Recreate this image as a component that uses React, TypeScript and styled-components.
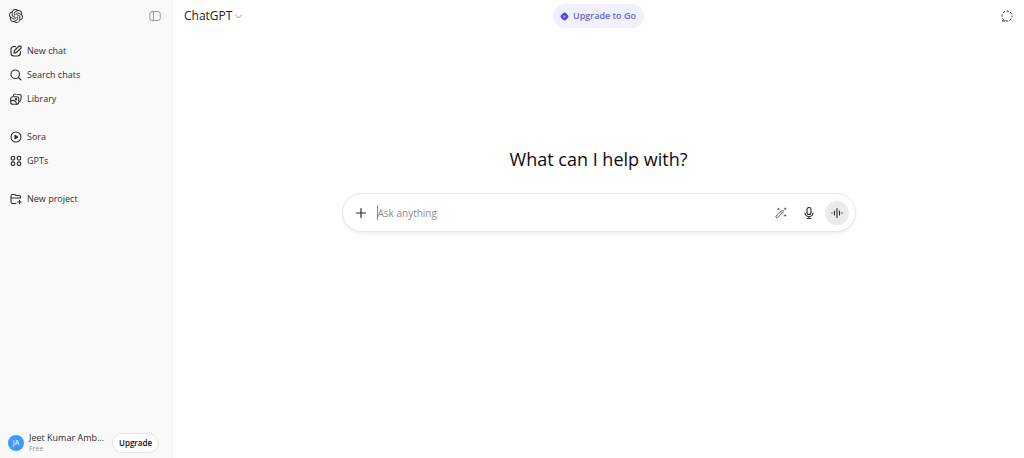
import React from "react";
import styled, { createGlobalStyle } from "styled-components";
import { SiOpenai } from "react-icons/si";

const GlobalStyle = createGlobalStyle`
  *, *::before, *::after { box-sizing: border-box; }
  body {
    margin: 0;
    background: #fefefe;
    color: #0d0d0d;
    font-family: "Open Sans", "Noto Sans", sans-serif;
    font-size: 9px;
    line-height: 12px;
  }
  button, input { font: inherit; color: inherit; }
  button { border: 0; padding: 0; background: none; cursor: pointer; }
  a { color: inherit; text-decoration: none; }
  svg { display: block; flex: none; }
`;

const Layout = styled.div`
  display: flex;
  min-height: 100vh;
`;

const Sidebar = styled.aside`
  display: flex;
  flex-direction: column;
  flex: none;
  width: 173px;
  background: #f9f9f9;
  border-right: 1px solid #f1f1f1;
`;

const SidebarHeader = styled.div`
  display: flex;
  align-items: center;
  justify-content: space-between;
  height: 32px;
  padding: 0 11px 0 9px;
  margin-bottom: 7px;
`;

const IconButton = styled.button<{ $color?: string }>`
  display: flex;
  align-items: center;
  justify-content: center;
  flex: none;
  color: ${({ $color }) => $color ?? "#2b2b2b"};
`;

const NavGroup = styled.nav`
  display: flex;
  flex-direction: column;
  margin-bottom: 14px;
`;

const NavItem = styled.a`
  display: flex;
  align-items: center;
  gap: 5px;
  height: 24px;
  padding: 0 10px;
  color: #2e2e2e;
`;

const Profile = styled.div`
  display: flex;
  align-items: center;
  gap: 5px;
  height: 30px;
  margin-top: auto;
  padding: 0 13px 0 8px;
`;

const Avatar = styled.span`
  display: flex;
  align-items: center;
  justify-content: center;
  flex: none;
  width: 16px;
  height: 16px;
  border-radius: 50%;
  background: #3b9bfb;
  color: #fff;
  font-size: 7px;
`;

const Account = styled.div`
  flex: 1;
  min-width: 0;
`;

const AccountName = styled.div`
  color: #2e2e2e;
  white-space: nowrap;
`;

const Plan = styled.div`
  color: #929292;
  font-size: 7px;
  line-height: 10px;
`;

const UpgradeButton = styled.button`
  flex: none;
  height: 20px;
  padding: 0 6px;
  border: 1px solid #e6e6e6;
  border-radius: 10px;
  background: #fff;
  font-size: 8px;
  font-weight: 600;
`;

const Main = styled.main`
  flex: 1;
  min-width: 0;
`;

const TopBar = styled.header`
  display: grid;
  grid-template-columns: 1fr auto 1fr;
  align-items: center;
  height: 32px;
  padding: 0 11px;
`;

const ModelButton = styled.button`
  display: flex;
  align-items: center;
  justify-self: start;
  gap: 2px;
  color: #222;
  font-size: 12px;
`;

const GoButton = styled.button`
  display: flex;
  align-items: center;
  gap: 4px;
  height: 24px;
  padding: 0 8px 0 7px;
  border-radius: 12px;
  background: #f1f1fb;
  color: #6664d2;
  font-weight: 600;
`;

const TemporaryChat = styled(IconButton)`
  justify-self: end;
`;

const Welcome = styled.section`
  display: flex;
  flex-direction: column;
  align-items: center;
  gap: 22px;
  padding: 115px 24px 24px;
`;

const Title = styled.h1`
  margin: 0;
  font-size: 18px;
  font-weight: 400;
  line-height: 24px;
`;

const Composer = styled.form`
  display: flex;
  align-items: center;
  width: 100%;
  max-width: 514px;
  height: 39px;
  padding: 0 6px 0 12px;
  border: 1px solid #e6e6e6;
  border-radius: 20px;
  background: #fff;
  box-shadow: 0 2px 3px rgba(0, 0, 0, 0.05);
`;

const Caret = styled.span`
  flex: none;
  width: 1px;
  height: 15px;
  margin-left: 10px;
  background: #8c8c8c;
`;

const Prompt = styled.input`
  flex: 1;
  min-width: 0;
  padding: 0;
  border: 0;
  outline: 0;
  background: none;
  font-size: 10px;
  line-height: 16px;
  &::placeholder { color: #8c8c8c; opacity: 1; }
`;

const Tools = styled.div`
  display: flex;
  align-items: center;
  gap: 16px;
`;

const VoiceButton = styled(IconButton)`
  width: 24px;
  height: 24px;
  margin-left: -6px;
  border-radius: 50%;
  background: #ebebeb;
`;

type IconProps = { size?: number; width?: number; children: React.ReactNode };

const Icon = ({ size = 12, width = 2, children }: IconProps) => (
  <svg
    width={size}
    height={size}
    viewBox="0 0 24 24"
    fill="none"
    stroke="currentColor"
    strokeWidth={width}
    strokeLinecap="round"
    strokeLinejoin="round"
    aria-hidden="true"
  >
    {children}
  </svg>
);

const NewChatIcon = () => (
  <Icon width={2.2}>
    <path d="M11 3H8a6 6 0 0 0-6 6v7a6 6 0 0 0 6 6h7a6 6 0 0 0 6-6v-3" />
    <path d="M17.500 2.500a2.800 2.800 0 0 1 4 4L13.500 14.500Q12 16 8 16q0-4 1.500-5.500z" />
  </Icon>
);

const SearchIcon = () => (
  <Icon width={2.2}>
    <circle cx="10.500" cy="10.500" r="8.500" />
    <path d="m17 17 5 5" />
  </Icon>
);

const LibraryIcon = () => (
  <Icon width={2.2}>
    <path d="M7 5a3.500 3.500 0 0 1 4-3l8 1a3.500 3.500 0 0 1 3.500 4l-1 7a3.500 3.500 0 0 1-2.500 3" />
    <rect x="1.500" y="7.500" width="16" height="15" rx="4" />
    <circle cx="12" cy="12.500" r="1.500" />
    <path d="M2 16c5-3 10 0 11 6" />
  </Icon>
);

const SoraIcon = () => (
  <Icon width={2.2}>
    <circle cx="12" cy="12" r="10" />
    <path d="M10 8.500v7l5.500-3.500z" fill="currentColor" />
  </Icon>
);

const GptsIcon = () => (
  <Icon width={2.4}>
    <circle cx="6" cy="6.500" r="3.600" />
    <circle cx="18" cy="6.500" r="3.600" />
    <circle cx="6" cy="17.500" r="3.600" />
    <circle cx="18" cy="17.500" r="3.600" />
  </Icon>
);

const NewProjectIcon = () => (
  <Icon width={2.2}>
    <path d="M12 21H5a3 3 0 0 1-3-3V6a3 3 0 0 1 3-3h3.500q1.500 0 2.500 1t2.500 1H18a3 3 0 0 1 3 3v2M2 10h19M19 14.500v7M15.500 18h7" />
  </Icon>
);

const SidebarIcon = () => (
  <Icon width={1.8}>
    <rect x="1.500" y="3" width="21" height="18" rx="4.500" />
    <path d="M9 3v18" />
  </Icon>
);

const ChevronIcon = () => (
  <Icon size={9} width={2.4}>
    <path d="m4 8 8 8 8-8" />
  </Icon>
);

const GoIcon = () => (
  <svg width="9" height="9" viewBox="0 0 18 18" aria-hidden="true">
    <path
      d="M9 1q2 0 3 1.500l3.500 3.500Q17 7.500 17 9t-1.500 3l-3.500 3.500Q10.500 17 9 17t-3-1.500l-3.500-3.500Q1 10.500 1 9t1.500-3l3.500-3.500Q7.500 1 9 1z"
      fill="#5146df"
    />
    <path d="M7 6v6l4-3z" fill="#c9c5ff" />
  </svg>
);

const TemporaryIcon = () => (
  <svg width="12" height="12" viewBox="0 0 24 24" fill="none" stroke="currentColor" strokeWidth="2" aria-hidden="true">
    <circle cx="12" cy="12" r="10" strokeDasharray="5 2.850" strokeDashoffset="2.500" />
    <path d="M2 22h6" />
  </svg>
);

const PlusIcon = () => (
  <Icon size={12} width={2.4}>
    <path d="M12 3v18M3 12h18" />
  </Icon>
);

const WandIcon = () => (
  <Icon size={12} width={2}>
    <path d="m2.500 18 11-11q1.500-1.500 3 0t0 3l-11 11q-1.500 1.500-3 0t0-3zM12 9l3 3" />
    <path d="M7 2.500v3M5.500 4h3M20.500 2v3M19 3.500h3M20.500 15.500v3M19 17h3" />
  </Icon>
);

const MicIcon = () => (
  <Icon size={12} width={2.2}>
    <rect x="8" y="1" width="8" height="14" rx="4" />
    <path d="M4 12a8 7 0 0 0 16 0M12 19v4M8.500 23h7" />
  </Icon>
);

const VoiceIcon = () => (
  <Icon size={12} width={2.2}>
    <path d="M2 11.500v1M7 8v8M12 3v18M17 8v8M22 11.500v1" />
  </Icon>
);

const groups = [
  [
    { label: "New chat", icon: <NewChatIcon /> },
    { label: "Search chats", icon: <SearchIcon /> },
    { label: "Library", icon: <LibraryIcon /> },
  ],
  [
    { label: "Sora", icon: <SoraIcon /> },
    { label: "GPTs", icon: <GptsIcon /> },
  ],
  [{ label: "New project", icon: <NewProjectIcon /> }],
];

export default function App() {
  return (
    <>
      <GlobalStyle />
      <Layout>
        <Sidebar>
          <SidebarHeader>
            <IconButton type="button" aria-label="Home">
              <SiOpenai size={14} />
            </IconButton>
            <IconButton type="button" aria-label="Close sidebar" $color="#8f8f8f">
              <SidebarIcon />
            </IconButton>
          </SidebarHeader>
          {groups.map((items) => (
            <NavGroup key={items[0].label} aria-label={items[0].label}>
              {items.map(({ label, icon }) => (
                <NavItem key={label} href="#">
                  {icon}
                  {label}
                </NavItem>
              ))}
            </NavGroup>
          ))}
          <Profile>
            <Avatar>JA</Avatar>
            <Account>
              <AccountName>Jeet Kumar Amb...</AccountName>
              <Plan>Free</Plan>
            </Account>
            <UpgradeButton type="button">Upgrade</UpgradeButton>
          </Profile>
        </Sidebar>
        <Main>
          <TopBar>
            <ModelButton type="button">
              ChatGPT
              <IconButton as="span" $color="#8f8f8f">
                <ChevronIcon />
              </IconButton>
            </ModelButton>
            <GoButton type="button">
              <GoIcon />
              Upgrade to Go
            </GoButton>
            <TemporaryChat type="button" aria-label="Temporary chat">
              <TemporaryIcon />
            </TemporaryChat>
          </TopBar>
          <Welcome>
            <Title>What can I help with?</Title>
            <Composer onSubmit={(event) => event.preventDefault()}>
              <IconButton type="button" aria-label="Add files">
                <PlusIcon />
              </IconButton>
              <Caret />
              <Prompt type="text" aria-label="Message" placeholder="Ask anything" />
              <Tools>
                <IconButton type="button" aria-label="Writing tools" $color="#666">
                  <WandIcon />
                </IconButton>
                <IconButton type="button" aria-label="Dictate">
                  <MicIcon />
                </IconButton>
                <VoiceButton type="button" aria-label="Voice mode">
                  <VoiceIcon />
                </VoiceButton>
              </Tools>
            </Composer>
          </Welcome>
        </Main>
      </Layout>
    </>
  );
}
